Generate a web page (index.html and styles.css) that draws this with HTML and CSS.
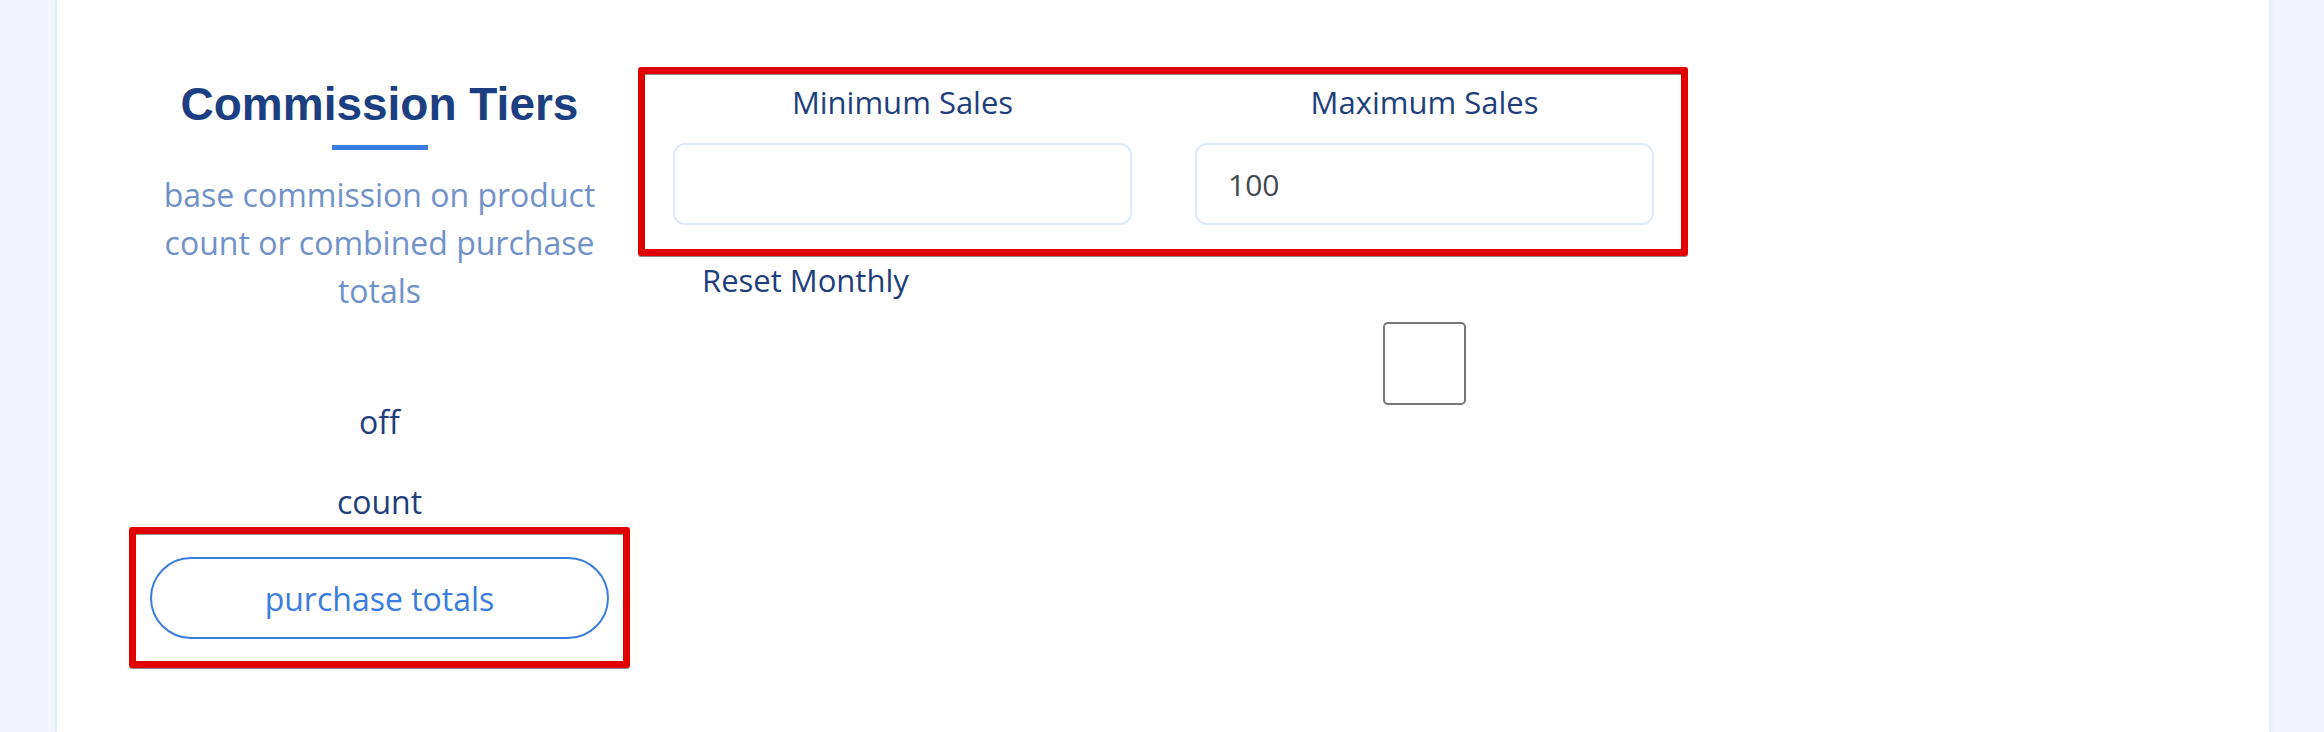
FILE: index.html
```html
<!DOCTYPE html>
<html lang="en">
<head>
  <meta charset="UTF-8">
  <meta name="viewport" content="width=device-width, initial-scale=1.0">
  <title>Commission Tiers</title>
  <link rel="stylesheet" href="styles.css">
</head>
<body>
  <!-- Commission settings card -->
  <div class="card">
    <div class="tier-intro">
      <h2 class="tier-title">Commission Tiers</h2>
      <div class="tier-bar"></div>
      <p class="tier-desc">base commission on product count or combined purchase totals</p>

      <div class="tier-options">
        <button type="button" class="tier-option">off</button>
        <button type="button" class="tier-option">count</button>
      </div>
      <div class="highlight highlight-option">
        <button type="button" class="tier-option selected">purchase totals</button>
      </div>
    </div>

    <div class="tier-fields">
      <div class="highlight highlight-range">
        <div class="field">
          <label for="minSales">Minimum Sales</label>
          <input type="text" id="minSales" />
        </div>
        <div class="field">
          <label for="maxSales">Maximum Sales</label>
          <input type="text" id="maxSales" value="100" />
        </div>
      </div>

      <div class="reset-row">
        <label class="reset-label" for="resetMonthly">Reset Monthly</label>
        <div class="reset-box">
          <input type="checkbox" id="resetMonthly" />
        </div>
      </div>
    </div>
  </div>
</body>
</html>
```

FILE: styles.css
```css
body {
  font-family: "Open Sans", sans-serif;
  margin: 0;
  padding: 0;
  background-color: #f2f5fb;
  color: #1e3e7c;
}
.card {
  box-sizing: border-box;
  height: 732px;
  margin: 0 53px 0 55px;
  padding: 67px 0 0 72px;
  display: flex;
  gap: 8px;
  background-color: #fff;
  border-left: 2px solid #e4ecf8;
  border-right: 2px solid #e4ecf8;
  box-shadow: 0 0 6px rgba(40, 80, 160, 0.05);
}

/* left column */
.tier-intro {
  width: 501px;
  display: flex;
  flex-direction: column;
  align-items: center;
  text-align: center;
}
.tier-title {
  margin: 10px 0 0;
  font-family: "Liberation Sans", Arial, sans-serif;
  font-size: 46px;
  line-height: 54px;
  font-weight: bold;
  color: #1b3f80;
}
.tier-bar {
  width: 96px;
  height: 5px;
  margin-top: 14px;
  background-color: #3b7ddd;
}
.tier-desc {
  width: 460px;
  margin: 21px 0 0;
  font-size: 32px;
  line-height: 48px;
  color: #7192c8;
}
.tier-options {
  margin-top: 80px;
  display: flex;
  flex-direction: column;
  gap: 28px;
}
.tier-option {
  height: 52px;
  padding: 0;
  font-family: "Open Sans", sans-serif;
  font-size: 32px;
  color: #1e3e7c;
  background: none;
  border: none;
  cursor: pointer;
}
.tier-option.selected {
  width: 100%;
  height: 82px;
  color: #3b7ddd;
  border: 2px solid #3b7ddd;
  border-radius: 41px;
}

/* red callouts */
.highlight {
  box-sizing: border-box;
  border: 7px solid #e00000;
  border-radius: 3px;
  box-shadow: 0 1px 0 #8a8a8a, inset 0 1px 0 #8a8a8a;
}
.highlight-option {
  width: 501px;
  padding: 23px 14px 22px;
}

/* right column */
.tier-fields {
  width: 1050px;
}
.highlight-range {
  display: grid;
  grid-template-columns: 1fr 1fr;
  column-gap: 63px;
  padding: 6px 27px 24px 28px;
}
.field label {
  display: block;
  text-align: center;
  font-size: 31px;
  line-height: 45px;
}
.field input {
  box-sizing: border-box;
  width: 100%;
  height: 82px;
  margin-top: 18px;
  padding: 0 31px;
  font-family: "Open Sans", sans-serif;
  font-size: 30px;
  color: #44484f;
  border: 2px solid #dfe9f8;
  border-radius: 12px;
  outline: none;
}
.reset-row {
  display: grid;
  grid-template-columns: 1fr 1fr;
  column-gap: 63px;
  margin-top: 2px;
  padding: 0 34px 0 35px;
}
.reset-label {
  padding-left: 29px;
  font-size: 31px;
  line-height: 45px;
}
.reset-box {
  display: flex;
  justify-content: center;
  padding-top: 64px;
}
.reset-box input {
  appearance: none;
  width: 83px;
  height: 83px;
  margin: 0;
  border: 2px solid #767676;
  border-radius: 5px;
  background-color: #fff;
}
```
